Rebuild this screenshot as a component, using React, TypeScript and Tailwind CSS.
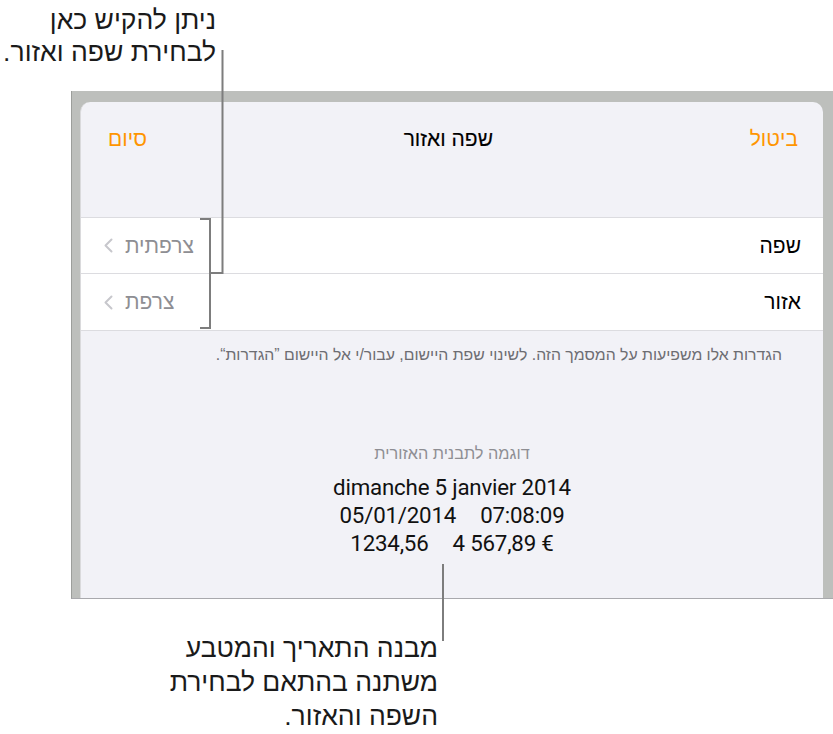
import React from "react";

const hebrewFont = "font-['Liberation_Sans','DejaVu_Sans',sans-serif]";

function Chevron() {
  return (
    <svg width="9" height="15" viewBox="0 0 9 15" className="shrink-0">
      <polyline points="7.5,1.5 1.5,7.5 7.5,13.5" fill="none" stroke="#c7c7cc" strokeWidth="2" strokeLinecap="round" strokeLinejoin="round" />
    </svg>
  );
}

function Row({ label, value, last }: { label: string; value: string; last?: boolean }) {
  return (
    <div className="flex h-[56px] bg-white">
      <div
        className={`flex flex-1 items-center justify-between pr-[22px] pl-[23px] ${
          last ? "" : "border-b border-[#dcdce0]"
        }`}
      >
        <span className="text-[21px] text-black">{label}</span>
        <span className="flex items-center gap-[12px] text-[21px] text-[#8e8e93]">
          {value}
          <Chevron />
        </span>
      </div>
    </div>
  );
}

export default function App() {
  return (
    <div dir="rtl" className={`relative w-[833px] h-[734px] overflow-hidden bg-white ${hebrewFont}`}>
      {/* top callout text */}
      <div dir="ltr" className="flex pt-[4px]">
        <p dir="rtl" className="w-[216px] text-right text-[26.5px] leading-[32px] text-[#1a1a1a]">
          ניתן להקיש כאן
          <br />
          לבחירת שפה ואזור.
        </p>
      </div>

      {/* device frame */}
      <div dir="ltr" className="mt-[23px] ml-[71px] w-[762px] h-[508px] bg-[#bdbfbc] border-l border-[#9c9e9b] border-b border-b-[#a9a9ad] pt-[11px] pl-[8px] pr-[10px] flex">
        <div dir="rtl" className="flex flex-1 flex-col rounded-t-[10px] bg-[#f2f2f7] border-l border-[#dadadc]">
          <div className="flex h-[74px] items-center justify-between pr-[25px] pl-[27px] text-[21px]">
            <span className="text-[#ff9500]">ביטול</span>
            <span className="text-black [-webkit-text-stroke:0.15px_black]">שפה ואזור</span>
            <span className="text-[#ff9500]">סיום</span>
          </div>

          <div className="mt-[41px] border-y border-[#dcdce0]">
            <Row label="שפה" value="צרפתית" />
            <Row label="אזור" value="צרפת" last />
          </div>

          <p className="pt-[14px] pr-[41px] text-[15.8px] leading-[20px] text-[#6d6d72]">
            הגדרות אלו משפיעות על המסמך הזה. לשינוי שפת היישום, עבור/י אל היישום ”הגדרות“.
          </p>

          <p className="mt-[78px] text-center text-[16.3px] leading-[20px] text-[#8e8e93]">
            דוגמה לתבנית האזורית
          </p>
          <div dir="ltr" className="mt-[10px] flex flex-col items-center font-['Roboto',sans-serif] text-[22.3px] leading-[28px] tracking-[-0.2px] text-[#111]">
            <span>dimanche 5 janvier 2014</span>
            <span className="flex gap-[24px]">
              <span>05/01/2014</span>
              <span>07:08:09</span>
            </span>
            <span className="flex gap-[24px]">
              <span>1234,56</span>
              <span>4 567,89 €</span>
            </span>
          </div>
        </div>
      </div>

      {/* bottom callout text */}
      <div dir="ltr" className="flex pt-[32px] pl-[100px]">
        <p dir="rtl" className="w-[338px] text-right text-[26.5px] leading-[34px] text-[#1a1a1a]">
          מבנה התאריך והמטבע
          <br />
          משתנה בהתאם לבחירת
          <br />
          השפה והאזור.
        </p>
      </div>

      {/* callout lines */}
      <svg className="pointer-events-none absolute inset-0" width="833" height="734" viewBox="0 0 833 734">
        <g fill="none" stroke="#7d7d7d" strokeWidth="2">
          <polyline points="222.5,50 222.5,273 210,273" />
          <polyline points="200,219 210,219 210,328 200,328" />
          <line x1="443" y1="564" x2="443" y2="641" />
        </g>
      </svg>
    </div>
  );
}
